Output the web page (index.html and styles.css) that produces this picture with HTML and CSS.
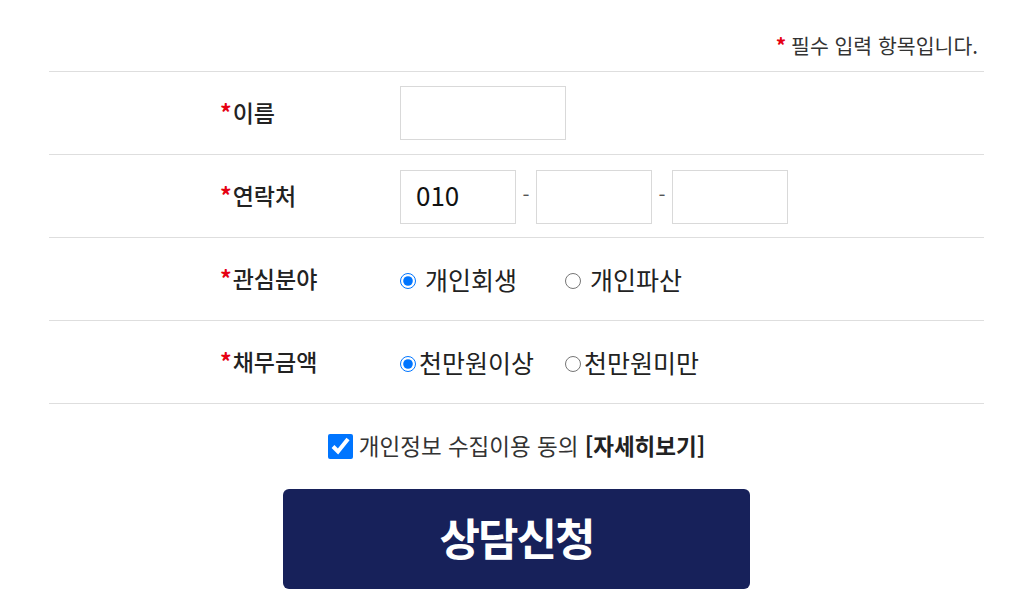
FILE: index.html
```html
<!DOCTYPE html>
<html lang="ko">
<head>
<meta charset="utf-8">
<title>상담신청</title>
<link rel="stylesheet" href="styles.css">
</head>
<body>
<form class="form">
  <div class="note"><span class="star">*</span><span>필수 입력 항목입니다.</span></div>
  <div class="rows">
    <div class="row">
      <div class="label"><span class="star">*</span>이름</div>
      <div class="field"><input class="text name" type="text"></div>
    </div>
    <div class="row">
      <div class="label"><span class="star">*</span>연락처</div>
      <div class="field">
        <input class="text phone" type="text" value="010">
        <span class="dash">-</span>
        <input class="text phone" type="text">
        <span class="dash">-</span>
        <input class="text phone" type="text">
      </div>
    </div>
    <div class="row">
      <div class="label"><span class="star">*</span>관심분야</div>
      <div class="field">
        <label class="opt spaced"><input type="radio" name="area" checked><span>개인회생</span></label>
        <label class="opt spaced"><input type="radio" name="area"><span>개인파산</span></label>
      </div>
    </div>
    <div class="row">
      <div class="label"><span class="star">*</span>채무금액</div>
      <div class="field">
        <label class="opt tight"><input type="radio" name="debt" checked><span>천만원이상</span></label>
        <label class="opt tight"><input type="radio" name="debt"><span>천만원미만</span></label>
      </div>
    </div>
  </div>
  <div class="agree">
    <label class="check"><input type="checkbox" checked><span>개인정보 수집이용 동의 <b>[자세히보기]</b></span></label>
  </div>
  <div class="actions">
    <button type="button" class="submit">상담신청</button>
  </div>
</form>
</body>
</html>
```

FILE: styles.css
```css
* { box-sizing: border-box; }
html, body { margin: 0; padding: 0; background: #fff; }
body {
  font-family: "Noto Sans CJK KR", "Noto Sans", sans-serif;
  color: #333;
}
.form {
  width: 935px;
  margin-left: 49px;
}
.note {
  height: 71px;
  display: flex;
  justify-content: flex-end;
  align-items: flex-end;
  padding: 0 6px 12px 0;
  font-size: 20.5px;
  line-height: 28px;
  color: #333;
}
.note .star { margin-right: 5px; }
.star { color: #e60012; font-weight: 700; }
.rows { border-top: 1px solid #dedede; }
.row {
  display: flex;
  align-items: center;
  height: 83px;
  border-bottom: 1px solid #dedede;
}
.label {
  width: 351px;
  padding-left: 171px;
  padding-bottom: 3px;
  font-size: 23px;
  font-weight: 500;
  color: #222;
}
.label .star { margin-right: 1px; }
.field {
  display: flex;
  align-items: center;
}
.text {
  height: 54px;
  border: 1px solid #d9d9d9;
  border-radius: 0;
  padding: 0 15px 4px;
  font-family: "Noto Sans CJK KR", sans-serif;
  font-size: 26px;
  color: #111;
  background: #fff;
  margin: 0;
  outline: none;
}
.name { width: 166px; margin-top: 0; }
.phone { width: 116px; margin-top: 1px; }
.dash {
  width: 20px;
  text-align: center;
  font-size: 20px;
  color: #555;
  margin-top: -3px;
}
.opt {
  display: flex;
  align-items: center;
  width: 165px;
  font-size: 25px;
  color: #222;
}
.opt input {
  width: 16px;
  height: 16px;
  margin: 4px 0 0 0;
  flex: none;
}
.opt.spaced span { margin-left: 9px; }
.opt.tight span { margin-left: 3px; }
.agree {
  display: flex;
  justify-content: center;
  padding-top: 26px;
  height: 85px;
}
.check {
  display: flex;
  align-items: center;
  font-size: 22.5px;
  color: #333;
  height: 30px;
}
.check input {
  width: 25px;
  height: 25px;
  margin: 2px 6px 0 0;
}
.check b { font-weight: 700; color: #222; }
.actions {
  display: flex;
  justify-content: center;
}
.submit {
  width: 467px;
  height: 100px;
  border: 0;
  border-radius: 6px;
  background: #17215a;
  color: #fff;
  font-family: "Noto Sans CJK KR", sans-serif;
  font-size: 44px;
  font-weight: 700;
  letter-spacing: -2px;
  padding: 0 0 4px;
}
```
